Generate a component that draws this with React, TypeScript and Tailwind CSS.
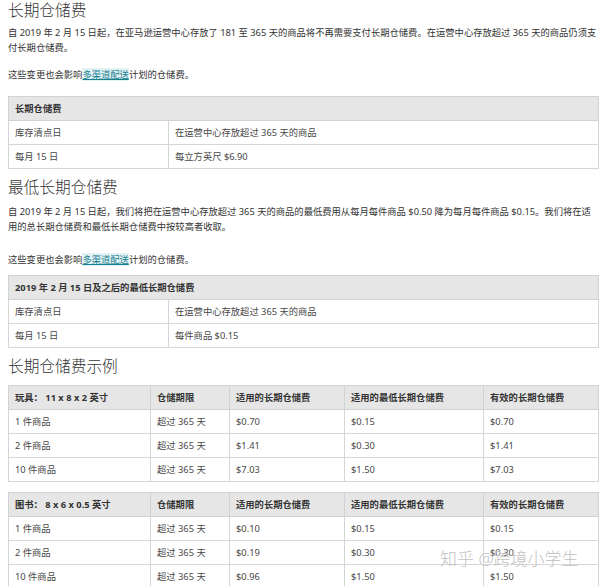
import React from "react";

const font = "font-['Noto_Sans','Noto_Sans_CJK_SC',sans-serif]";

function Link() {
  return <span className="text-[#16808f] underline bg-[#e3f2f5]">多渠道配送</span>;
}

function Title({ children, className = "" }: { children: React.ReactNode; className?: string }) {
  return <h2 className={`text-[15.7px] leading-[20px] text-[#333] font-light ${className}`}>{children}</h2>;
}

function TwoColTable({ head, rows }: { head: string; rows: [string, string][] }) {
  return (
    <table className="w-[591px] border-collapse text-[9.3px] text-[#474747] table-fixed">
      <colgroup>
        <col className="w-[160px]" />
        <col />
      </colgroup>
      <thead>
        <tr className="bg-[#e6e6e6] h-[24px]">
          <th colSpan={2} className="border border-[#d2d2d2] text-left font-bold px-[6px] text-[#333]">{head}</th>
        </tr>
      </thead>
      <tbody>
        {rows.map((r, i) => (
          <tr key={i} className="h-[24px]">
            <td className="border border-[#d6d6d6] px-[6px]">{r[0]}</td>
            <td className="border border-[#d6d6d6] px-[6px]">{r[1]}</td>
          </tr>
        ))}
      </tbody>
    </table>
  );
}

function ExampleTable({ head, rows }: { head: string; rows: string[][] }) {
  const heads = [head, "仓储期限", "适用的长期仓储费", "适用的最低长期仓储费", "有效的长期仓储费"];
  return (
    <table className="w-[591px] border-collapse text-[9.3px] text-[#474747] table-fixed">
      <colgroup>
        <col className="w-[142px]" />
        <col className="w-[79px]" />
        <col className="w-[115px]" />
        <col className="w-[139px]" />
        <col />
      </colgroup>
      <thead>
        <tr className="bg-[#e6e6e6] h-[24px]">
          {heads.map((h, i) => (
            <th key={i} className="border border-[#d2d2d2] text-left font-bold px-[6px] text-[#333] whitespace-nowrap">
              {h}
            </th>
          ))}
        </tr>
      </thead>
      <tbody>
        {rows.map((r, i) => (
          <tr key={i} className="h-[24px]">
            {r.map((c, j) => (
              <td key={j} className="border border-[#d6d6d6] px-[6px] whitespace-nowrap">
                {c}
              </td>
            ))}
          </tr>
        ))}
      </tbody>
    </table>
  );
}

export default function App() {
  return (
    <div className={`relative w-[600px] h-[586px] overflow-hidden bg-white pl-[8px] ${font}`}>
      <Title>长期仓储费</Title>
      <p className="mt-[5px] text-[9.3px] leading-[15px] text-[#333] whitespace-nowrap">
        自 2019 年 2 月 15 日起，在亚马逊运营中心存放了 181 至 365 天的商品将不再需要支付长期仓储费。在运营中心存放超过 365 天的商品仍须支
        <br />
        付长期仓储费。
      </p>
      <p className="mt-[12px] text-[9.3px] leading-[15px] text-[#333]">
        这些变更也会影响<Link />计划的仓储费。
      </p>
      <div className="mt-[14px]">
        <TwoColTable
          head="长期仓储费"
          rows={[
            ["库存清点日", "在运营中心存放超过 365 天的商品"],
            ["每月 15 日", "每立方英尺 $6.90"],
          ]}
        />
      </div>
      <Title className="mt-[8px]">最低长期仓储费</Title>
      <p className="mt-[7px] text-[9.3px] leading-[15px] text-[#333] whitespace-nowrap">
        自 2019 年 2 月 15 日起，我们将把在运营中心存放超过 365 天的商品的最低费用从每月每件商品 $0.50 降为每月每件商品 $0.15。我们将在适
        <br />
        用的总长期仓储费和最低长期仓储费中按较高者收取。
      </p>
      <p className="mt-[18px] text-[9.3px] leading-[15px] text-[#333]">
        这些变更也会影响<Link />计划的仓储费。
      </p>
      <div className="mt-[8px]">
        <TwoColTable
          head="2019 年 2 月 15 日及之后的最低长期仓储费"
          rows={[
            ["库存清点日", "在运营中心存放超过 365 天的商品"],
            ["每月 15 日", "每件商品 $0.15"],
          ]}
        />
      </div>
      <Title className="mt-[8px]">长期仓储费示例</Title>
      <div className="mt-[9px]">
        <ExampleTable
          head="玩具： 11 x 8 x 2 英寸"
          rows={[
            ["1 件商品", "超过 365 天", "$0.70", "$0.15", "$0.70"],
            ["2 件商品", "超过 365 天", "$1.41", "$0.30", "$1.41"],
            ["10 件商品", "超过 365 天", "$7.03", "$1.50", "$7.03"],
          ]}
        />
      </div>
      <div className="mt-[10px]">
        <ExampleTable
          head="图书： 8 x 6 x 0.5 英寸"
          rows={[
            ["1 件商品", "超过 365 天", "$0.10", "$0.15", "$0.15"],
            ["2 件商品", "超过 365 天", "$0.19", "$0.30", "$0.30"],
            ["10 件商品", "超过 365 天", "$0.96", "$1.50", "$1.50"],
          ]}
        />
      </div>
      <div className="absolute left-[440px] top-[548px] text-[17px] leading-[22px] font-light text-[rgba(175,175,175,0.8)] whitespace-nowrap [text-shadow:0_0_1px_rgba(255,255,255,0.9)]">
        知乎 @跨境小学生
      </div>
    </div>
  );
}
